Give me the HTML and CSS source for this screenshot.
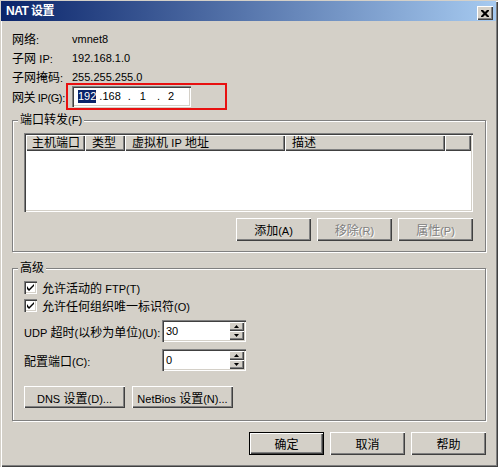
FILE: index.html
```html
<!DOCTYPE html>
<html lang="zh-CN">
<head>
<meta charset="utf-8">
<title>NAT 设置</title>
<link rel="stylesheet" href="styles.css">
</head>
<body>
<div class="window">
  <div class="titlebar">
    <span class="title">NAT 设置</span>
    <span class="close-btn"><svg width="8" height="7" viewBox="0 0 8 7"><path d="M0 0h2l2 2 2-2h2v1L5.5 3.5 8 6v1H6L4 5 2 7H0V6l2.5-2.5L0 1z" fill="#000"/></svg></span>
  </div>
  <div class="content">
    <div class="info-row"><span class="info-label">网络<span class="lat">:</span></span><span class="info-value">vmnet8</span></div>
    <div class="info-row"><span class="info-label">子网 <span class="lat">IP:</span></span><span class="info-value">192.168.1.0</span></div>
    <div class="info-row"><span class="info-label">子网掩码<span class="lat">:</span></span><span class="info-value">255.255.255.0</span></div>
    <div class="gw-row">
      <span class="gw-label">网关<span class="lat"> IP(G):</span></span>
      <div class="highlight-box">
        <div class="ip-field">
          <span class="oct sel">192</span><span class="ip-dot d1">.</span><span class="oct">168</span><span class="ip-dot d2">.</span><span class="oct o3">1</span><span class="ip-dot d3">.</span><span class="oct o4">2</span>
        </div>
      </div>
    </div>

    <section class="group group-pf">
      <div class="group-title">端口转发<span class="lat">(F)</span></div>
      <div class="listview">
        <div class="lv-head">
          <div class="lv-col lv-c1">主机端口</div>
          <div class="lv-col lv-c2">类型</div>
          <div class="lv-col lv-c3">虚拟机 <span class="lat">IP</span> 地址</div>
          <div class="lv-col lv-c4">描述</div>
          <div class="lv-col lv-c5"></div>
        </div>
        <div class="lv-body"></div>
      </div>
      <div class="btn-row">
        <button class="btn">添加<span class="lat">(A)</span></button>
        <button class="btn disabled">移除<span class="lat">(R)</span></button>
        <button class="btn disabled">属性<span class="lat">(P)</span></button>
      </div>
    </section>

    <section class="group group-adv">
      <div class="group-title">高级</div>
      <div class="check-row">
        <span class="checkbox"><svg width="7" height="7" viewBox="0 0 7 7"><path d="M0 2v3l2 2 5-5V0L2 5z" fill="#000"/></svg></span>
        <span>允许活动的 <span class="lat">FTP(T)</span></span>
      </div>
      <div class="check-row">
        <span class="checkbox"><svg width="7" height="7" viewBox="0 0 7 7"><path d="M0 2v3l2 2 5-5V0L2 5z" fill="#000"/></svg></span>
        <span>允许任何组织唯一标识符<span class="lat">(O)</span></span>
      </div>
      <div class="field-row row-udp">
        <span class="field-label"><span class="lat">UDP</span> 超时<span class="lat">(</span>以秒为单位<span class="lat">)(U):</span></span>
        <div class="spin">
          <span class="spin-val">30</span>
          <div class="spin-btns">
            <span class="spin-btn"><svg width="5" height="3" viewBox="0 0 5 3"><path d="M2.5 0L5 3H0z" fill="#000"/></svg></span>
            <span class="spin-btn"><svg width="5" height="3" viewBox="0 0 5 3"><path d="M0 0h5L2.5 3z" fill="#000"/></svg></span>
          </div>
        </div>
      </div>
      <div class="field-row row-port">
        <span class="field-label">配置端口<span class="lat">(C):</span></span>
        <div class="spin">
          <span class="spin-val">0</span>
          <div class="spin-btns">
            <span class="spin-btn"><svg width="5" height="3" viewBox="0 0 5 3"><path d="M2.5 0L5 3H0z" fill="#000"/></svg></span>
            <span class="spin-btn"><svg width="5" height="3" viewBox="0 0 5 3"><path d="M0 0h5L2.5 3z" fill="#000"/></svg></span>
          </div>
        </div>
      </div>
      <div class="adv-btns">
        <button class="btn btn-wide"><span class="lat">DNS</span> 设置<span class="lat">(D)...</span></button>
        <button class="btn btn-wide"><span class="lat">NetBios</span> 设置<span class="lat">(N)...</span></button>
      </div>
    </section>

    <div class="footer">
      <button class="btn default">确定</button>
      <button class="btn">取消</button>
      <button class="btn">帮助</button>
    </div>
  </div>
</div>
</body>
</html>
```

FILE: styles.css
```css
* { box-sizing: border-box; }
html, body { margin: 0; padding: 0; }
body {
  width: 498px;
  height: 467px;
  background: #d4d0c8;
  font-family: "Liberation Sans", "Noto Sans CJK SC", sans-serif;
  font-size: 12px;
  color: #000;
  overflow: hidden;
}
.lat { font-size: 11px; }

.window {
  width: 498px;
  height: 467px;
  background: #d4d0c8;
  padding: 1px 2px 2px 1px;
  display: flex;
  flex-direction: column;
  box-shadow: inset 1px 1px 0 #d4d0c8, inset 2px 2px 0 #fff, inset -1px -1px 0 #404040, inset -2px -2px 0 #808080;
}

.titlebar {
  height: 20px;
  flex: none;
  display: flex;
  justify-content: space-between;
  align-items: center;
  padding: 0 3px 0 5px;
  background: linear-gradient(to right, #0a246a, #a6caf0);
}
.title {
  color: #fff;
  font-weight: bold;
  font-size: 12px;
  line-height: 14px;
  letter-spacing: -0.5px;
}
.close-btn {
  width: 16px;
  height: 14px;
  align-self: flex-end;
  margin-bottom: 1px;
  display: flex;
  align-items: center;
  justify-content: center;
  background: #d4d0c8;
  box-shadow: inset 1px 1px 0 #fff, inset -1px -1px 0 #404040, inset -2px -2px 0 #808080;
}

.content {
  flex: 1;
  padding: 8px 10px 0 11px;
  display: flex;
  flex-direction: column;
}

.info-row {
  height: 19px;
  display: flex;
  align-items: center;
}
.info-label { width: 60px; white-space: nowrap; }
.info-value { font-size: 11px; }

.gw-row {
  margin-top: -3px;
  height: 27px;
  display: flex;
  align-items: center;
}
.gw-label { width: 54px; white-space: nowrap; letter-spacing: -0.4px; }
.highlight-box {
  width: 161px;
  height: 27px;
  border: 2px solid #e81010;
  padding: 0 0 0 4px;
  display: flex;
  align-items: center;
}
.ip-field {
  width: 119px;
  height: 21px;
  background: #fff;
  box-shadow: inset 1px 1px 0 #808080, inset 2px 2px 0 #404040, inset -1px -1px 0 #fff, inset -2px -2px 0 #d4d0c8;
  padding: 0 0 0 6px;
  display: flex;
  align-items: center;
  font-size: 11px;
  line-height: 13px;
}
.oct.sel { background: #0a246a; color: #fff; }
.ip-dot.d1 { margin-left: 3px; }
.ip-dot.d2 { margin-left: 7px; }
.oct.o3 { margin-left: 9px; }
.ip-dot.d3 { margin-left: 11px; }
.oct.o4 { margin-left: 8px; }

.group {
  border: 1px solid #808080;
  box-shadow: inset 1px 1px 0 #fff, 1px 1px 0 #fff;
  padding: 0 12px 10px 11px;
  display: flex;
  flex-direction: column;
}
.group-title {
  align-self: flex-start;
  margin: -8px 0 0 -6px;
  padding: 0 2px;
  background: #d4d0c8;
  line-height: 14px;
  height: 14px;
  white-space: nowrap;
}
.group-pf { margin-top: 10px; }
.group-pf .group-title { margin-bottom: 6px; }

.listview {
  height: 79px;
  padding: 2px;
  background: #fff;
  box-shadow: inset 1px 1px 0 #808080, inset 2px 2px 0 #404040, inset -1px -1px 0 #fff, inset -2px -2px 0 #d4d0c8;
  display: flex;
  flex-direction: column;
}
.lv-head {
  height: 16px;
  display: flex;
  background: #d4d0c8;
}
.lv-col {
  height: 16px;
  line-height: 16px;
  padding-left: 7px;
  white-space: nowrap;
  box-shadow: inset 1px 1px 0 #fff, inset -1px -1px 0 #404040, inset -2px -2px 0 #808080;
}
.lv-c1 { width: 59px; padding-left: 6px; }
.lv-c2 { width: 40px; }
.lv-c3 { width: 160px; }
.lv-c4 { width: 160px; }
.lv-c5 { flex: 1; }
.lv-body { flex: 1; }

.btn {
  font: inherit;
  color: #000;
  border: none;
  margin: 0;
  padding: 0;
  width: 75px;
  height: 23px;
  background: #d4d0c8;
  box-shadow: inset 1px 1px 0 #fff, inset -1px -1px 0 #404040, inset -2px -2px 0 #808080;
  white-space: nowrap;
}
.btn.disabled {
  color: #808080;
  text-shadow: 1px 1px 0 #fff;
}
.btn.default {
  border: 1px solid #000;
}
.btn-row {
  margin-top: 6px;
  display: flex;
  justify-content: flex-end;
  gap: 6px;
}

.group-adv { margin-top: 16px; padding-bottom: 12px; }
.group-adv .group-title { margin-bottom: 3px; }
.check-row {
  height: 18px;
  display: flex;
  align-items: center;
  gap: 5px;
}
.checkbox {
  width: 13px;
  height: 13px;
  background: #fff;
  box-shadow: inset 1px 1px 0 #808080, inset 2px 2px 0 #404040, inset -1px -1px 0 #fff, inset -2px -2px 0 #d4d0c8;
  display: flex;
  align-items: center;
  justify-content: center;
}
.field-row {
  height: 22px;
  display: flex;
  align-items: center;
}
.row-udp { margin-top: 6px; }
.row-port { margin-top: 7px; }
.field-label { width: 138px; white-space: nowrap; }
.spin {
  width: 84px;
  height: 22px;
  padding: 2px;
  background: #fff;
  box-shadow: inset 1px 1px 0 #808080, inset 2px 2px 0 #404040, inset -1px -1px 0 #fff, inset -2px -2px 0 #d4d0c8;
  display: flex;
}
.spin-val {
  flex: 1;
  padding-left: 2px;
  line-height: 18px;
  font-size: 11px;
}
.spin-btns {
  width: 15px;
  display: flex;
  flex-direction: column;
}
.spin-btn {
  flex: 1;
  background: #d4d0c8;
  box-shadow: inset 1px 1px 0 #fff, inset -1px -1px 0 #404040, inset -2px -2px 0 #808080;
  display: flex;
  align-items: center;
  justify-content: center;
}
.adv-btns {
  margin-top: 15px;
  display: flex;
  gap: 7px;
}
.btn-wide { width: 101px; height: 22px; }

.footer {
  margin-top: 11px;
  display: flex;
  justify-content: flex-end;
  gap: 6px;
}
```
